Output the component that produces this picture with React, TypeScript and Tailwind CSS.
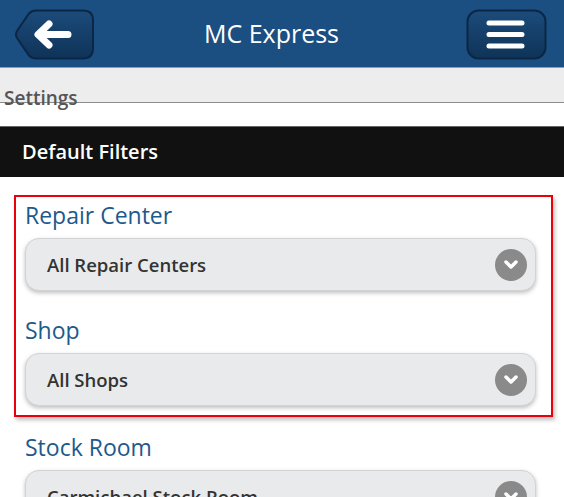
import React from 'react';

const font = { fontFamily: '"Open Sans", "Liberation Sans", sans-serif' };

const BackButton: React.FC = () => (
  <svg width="81" height="51" viewBox="0 0 81 51" className="block">
    <defs>
      <linearGradient id="btnGrad" x1="0" y1="0" x2="0" y2="1">
        <stop offset="0" stopColor="#1c4b7b" />
        <stop offset="1" stopColor="#0f3358" />
      </linearGradient>
    </defs>
    <path
      d="M22 1.5 H69 Q79 1.5 79 11.5 V39.5 Q79 49.5 69 49.5 H22 Q18 49.5 15 46.5 L3 29 Q1 25.5 3 22 L15 4.5 Q18 1.5 22 1.5 Z"
      fill="url(#btnGrad)"
      stroke="#0b2745"
      strokeWidth="2"
    />
    <path d="M35 15 L24 25.5 L35 36 M25 25.5 H54" fill="none" stroke="#fff" strokeWidth="7" strokeLinecap="round" strokeLinejoin="round" />
  </svg>
);

const MenuButton: React.FC = () => (
  <svg width="81" height="51" viewBox="0 0 81 51" className="block">
    <defs>
      <linearGradient id="menuGrad" x1="0" y1="0" x2="0" y2="1">
        <stop offset="0" stopColor="#1c4b7b" />
        <stop offset="1" stopColor="#0f3358" />
      </linearGradient>
    </defs>
    <rect x="1.5" y="1.5" width="78" height="48" rx="11" fill="url(#menuGrad)" stroke="#0b2745" strokeWidth="2" />
    <path d="M23 14 H56 M23 25.5 H56 M23 37 H56" stroke="#fff" strokeWidth="5" strokeLinecap="round" />
  </svg>
);

const Chevron: React.FC = () => (
  <div className="flex h-[32px] w-[32px] items-center justify-center rounded-full bg-[#8a8a8a]">
    <svg width="16" height="12" viewBox="0 0 16 12">
      <path d="M3 3 L8 8 L13 3" fill="none" stroke="#fff" strokeWidth="3.5" strokeLinecap="round" strokeLinejoin="round" />
    </svg>
  </div>
);

const Field: React.FC<{ label: string; value: string }> = ({ label, value }) => (
  <div>
    <div className="h-[30px] text-[23px] leading-[30px] text-[#1d5a8c]">{label}</div>
    <div className="mt-[8px] flex h-[53px] items-center justify-between rounded-[14px] border border-[#d2d3d5] bg-[#e9eaec] pl-[21px] pr-[8px] shadow-[0_2px_4px_rgba(0,0,0,0.25)]">
      <span className="text-[18.5px] font-semibold text-[#333]">{value}</span>
      <Chevron />
    </div>
  </div>
);

export default function App() {
  return (
    <div className="h-[497px] w-[564px] overflow-hidden bg-white" style={font}>
      <div className="flex h-[67px] items-center justify-between bg-[#1b4e81] pl-[14px] pr-[17px] pt-[1px]">
        <BackButton />
        <span className="mr-[18px] text-[25px] text-white">MC Express</span>
        <MenuButton />
      </div>
      <div className="h-[1px] bg-[#9a9a9a]" />
      <div className="h-[35px] border-b border-[#8c8c8c] bg-[#ededed]">
        <div className="relative top-[20px] pl-[4px] text-[19px] font-semibold leading-[20px] text-[#555]">Settings</div>
      </div>
      <div className="mt-[23px] flex h-[51px] items-center border-t border-[#666] bg-[#111] pl-[22px] text-[20px] font-semibold text-white">
        Default Filters
      </div>
      <div className="mt-[18px] ml-[14px] mr-[11px] border-2 border-[#e8000b] pb-[9px] pl-[9px] pr-[15px] pt-[3px] shadow-[2px_3px_4px_rgba(0,0,0,0.25)]">
        <Field label="Repair Center" value="All Repair Centers" />
        <div className="mt-[24px]">
          <Field label="Shop" value="All Shops" />
        </div>
      </div>
      <div className="ml-[25px] mr-[28px] mt-[15px]">
        <Field label="Stock Room" value="Carmichael Stock Room" />
      </div>
    </div>
  );
}
